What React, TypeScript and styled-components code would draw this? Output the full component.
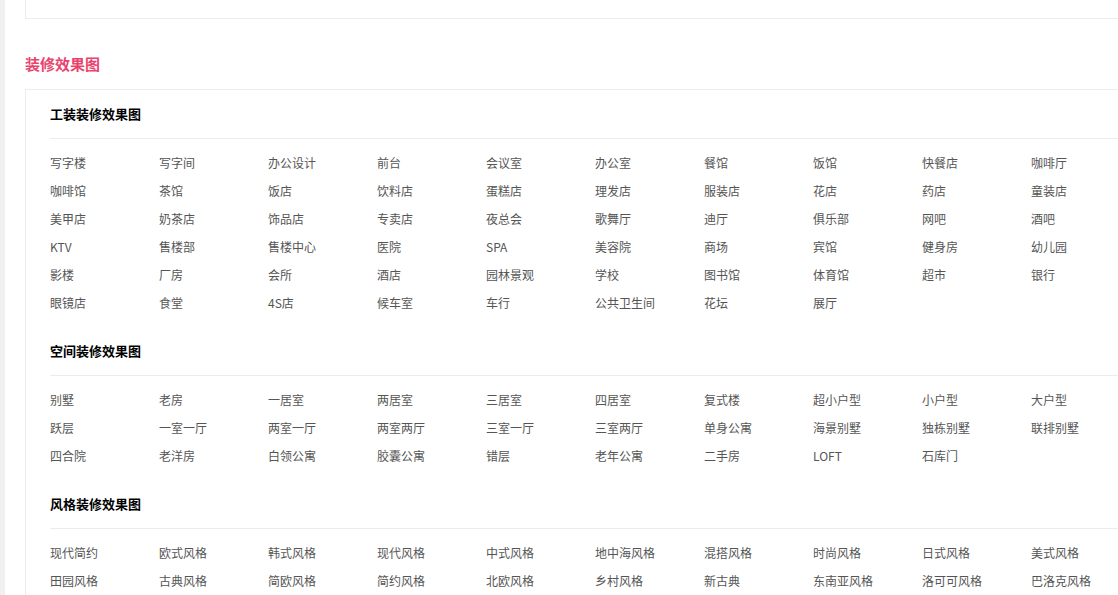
import React from "react";
import styled, { createGlobalStyle } from "styled-components";

const Global = createGlobalStyle`
  html, body { margin: 0; padding: 0; background: #f0f0f0; overflow: hidden; }
  body { font-family: "SimSun", "Noto Sans CJK SC", "Liberation Sans", sans-serif; }
  * { box-sizing: border-box; }
`;

const Main = styled.div`
  margin-left: 5px;
  background: #fff;
  padding-left: 20px;
  min-height: 100vh;
  width: 1300px;
`;

const TopCard = styled.div`
  width: 1200px;
  height: 19px;
  border: 1px solid #ececec;
  border-top: none;
`;

const SectionTitle = styled.h2`
  margin: 30px 0 10px;
  height: 30px;
  line-height: 30px;
  font-size: 15px;
  font-weight: bold;
  color: #e8436c;
`;

const Card = styled.div`
  width: 1200px;
  border: 1px solid #ececec;
  padding: 0 24px;
`;

const GroupHead = styled.h3`
  margin: 0;
  height: 49px;
  line-height: 48px;
  font-size: 13px;
  font-weight: bold;
  color: #000;
  border-bottom: 1px solid #ececec;
`;

const Grid = styled.ul`
  list-style: none;
  margin: 0;
  padding: 10px 0;
  display: grid;
  grid-template-columns: repeat(10, 109px);
`;

const Item = styled.li`
  height: 28px;
  line-height: 28px;
  font-size: 12px;
  color: #555;
  white-space: nowrap;
`;

const groups: { title: string; items: string[] }[] = [
  {
    title: "工装装修效果图",
    items: [
      "写字楼", "写字间", "办公设计", "前台", "会议室", "办公室", "餐馆", "饭馆", "快餐店", "咖啡厅",
      "咖啡馆", "茶馆", "饭店", "饮料店", "蛋糕店", "理发店", "服装店", "花店", "药店", "童装店",
      "美甲店", "奶茶店", "饰品店", "专卖店", "夜总会", "歌舞厅", "迪厅", "俱乐部", "网吧", "酒吧",
      "KTV", "售楼部", "售楼中心", "医院", "SPA", "美容院", "商场", "宾馆", "健身房", "幼儿园",
      "影楼", "厂房", "会所", "酒店", "园林景观", "学校", "图书馆", "体育馆", "超市", "银行",
      "眼镜店", "食堂", "4S店", "候车室", "车行", "公共卫生间", "花坛", "展厅",
    ],
  },
  {
    title: "空间装修效果图",
    items: [
      "别墅", "老房", "一居室", "两居室", "三居室", "四居室", "复式楼", "超小户型", "小户型", "大户型",
      "跃层", "一室一厅", "两室一厅", "两室两厅", "三室一厅", "三室两厅", "单身公寓", "海景别墅", "独栋别墅", "联排别墅",
      "四合院", "老洋房", "白领公寓", "胶囊公寓", "错层", "老年公寓", "二手房", "LOFT", "石库门",
    ],
  },
  {
    title: "风格装修效果图",
    items: [
      "现代简约", "欧式风格", "韩式风格", "现代风格", "中式风格", "地中海风格", "混搭风格", "时尚风格", "日式风格", "美式风格",
      "田园风格", "古典风格", "简欧风格", "简约风格", "北欧风格", "乡村风格", "新古典", "东南亚风格", "洛可可风格", "巴洛克风格",
    ],
  },
];

export default function App() {
  return (
    <>
      <Global />
      <Main>
        <TopCard />
        <SectionTitle>装修效果图</SectionTitle>
        <Card>
          {groups.map((g) => (
            <section key={g.title}>
              <GroupHead>{g.title}</GroupHead>
              <Grid>
                {g.items.map((it) => (
                  <Item key={it}>{it}</Item>
                ))}
              </Grid>
            </section>
          ))}
        </Card>
      </Main>
    </>
  );
}
